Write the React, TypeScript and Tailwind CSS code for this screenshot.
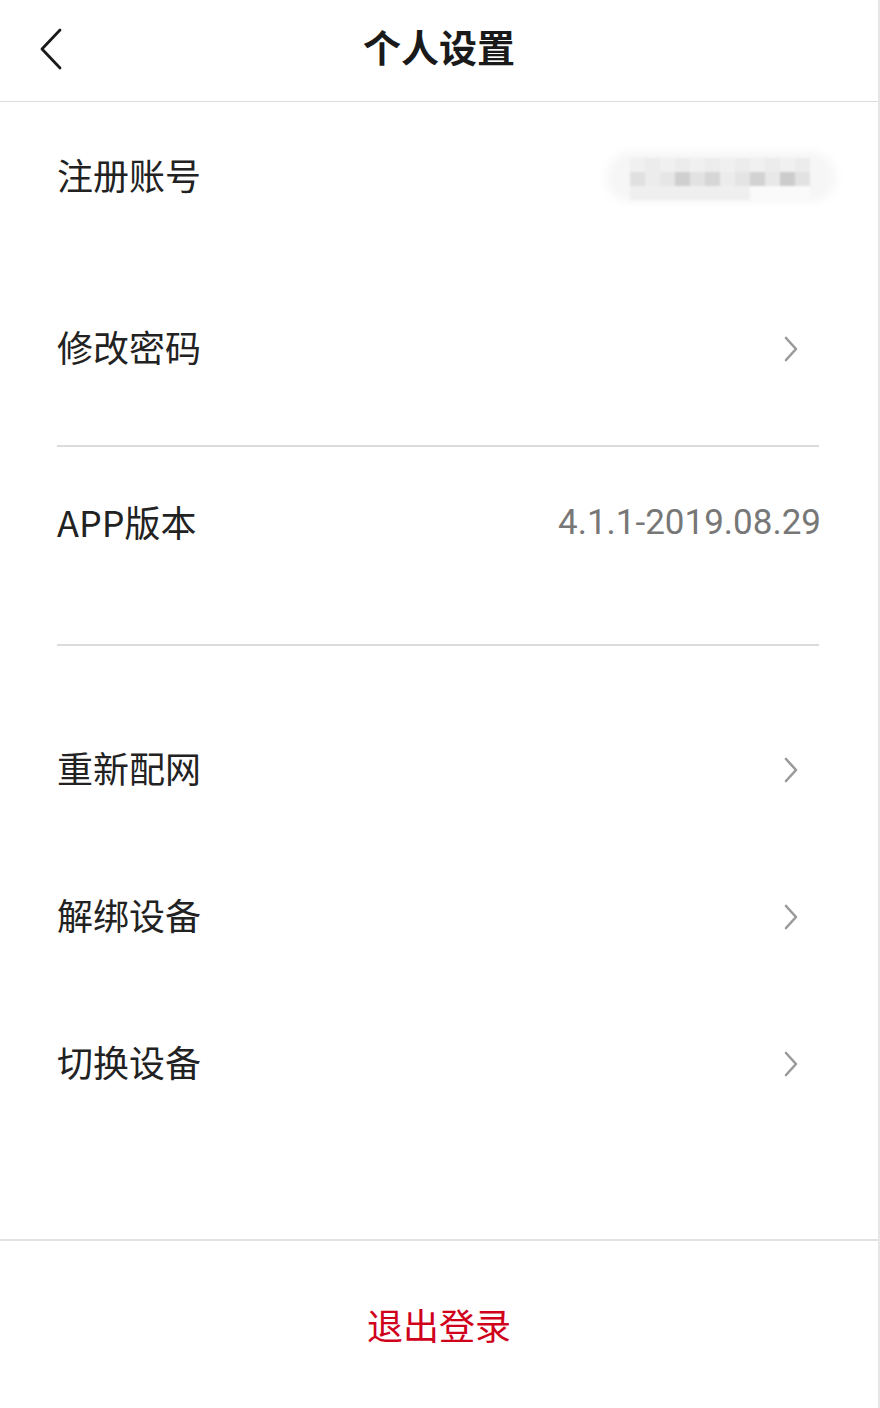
import React from "react";

const font = { fontFamily: '"Noto Sans CJK SC", "Noto Sans", sans-serif' };

function Chevron() {
  return (
    <svg width="16" height="26" viewBox="0 0 16 26" className="mr-[22px]">
      <path d="M3 2 L13 13 L3 24" fill="none" stroke="#9a9a9a" strokeWidth="2.6" strokeLinecap="round" strokeLinejoin="round" />
    </svg>
  );
}

function Label({ children }: { children: React.ReactNode }) {
  return <span className="text-[36px] leading-[36px] pb-[6px] text-[#222]">{children}</span>;
}

function Blur() {
  const cells = ["#e0e0e0", "#ececec", "#e6e6e6", "#cfcfcf", "#e2e2e2", "#d6d6d6", "#ececec", "#e4e4e4", "#d2d2d2", "#e8e8e8", "#cccccc", "#e2e2e2"];
  return (
    <div className="relative w-[230px] h-[50px] mr-[-15px]">
      <div className="absolute inset-0 rounded-full bg-[#f6f6f6] blur-[4px]" />
      <div className="absolute left-[24px] top-[6px] flex flex-col blur-[1px]">
        <div className="flex">
          {cells.map((c, i) => (
            <div key={"a" + i} className="w-[15px] h-[14px]" style={{ background: i % 2 ? "#ececec" : "#f0f0f0" }} />
          ))}
        </div>
        <div className="flex">
          {cells.map((c, i) => (
            <div key={"b" + i} className="w-[15px] h-[14px]" style={{ background: c }} />
          ))}
        </div>
        <div className="flex">
          {cells.map((c, i) => (
            <div key={"c" + i} className="w-[15px] h-[14px]" style={{ background: i < 8 ? "#efefef" : "#fafafa" }} />
          ))}
        </div>
      </div>
    </div>
  );
}

export default function App() {
  return (
    <div className="w-[880px] h-[1408px] bg-white flex flex-col border-r-2 border-[#e6e6e6] overflow-hidden" style={font}>
      <div className="h-[102px] shrink-0 border-b-[1.5px] border-[#dcdcdc] relative flex items-center justify-center">
        <svg width="28" height="44" viewBox="0 0 28 44" className="absolute left-[37px] top-[27px]">
          <path d="M23 3 L5 22 L23 41" fill="none" stroke="#1a1a1a" strokeWidth="2.8" strokeLinecap="round" strokeLinejoin="round" />
        </svg>
        <span className="text-[38px] font-bold text-[#1a1a1a] leading-[38px] -mt-[10px]">个人设置</span>
      </div>

      <div className="px-[57px] flex-1 flex flex-col">
        <div className="h-[150px] flex items-center justify-between">
          <Label>注册账号</Label>
          <Blur />
        </div>
        <div className="h-[193px] flex items-center justify-between">
          <Label>修改密码</Label>
          <Chevron />
        </div>
        <div className="h-[2px] bg-[#dcdcdc] mr-[2px]" />
        <div className="h-[197px] flex items-start justify-between pt-[56px]">
          <Label>APP版本</Label>
          <span className="text-[35px] leading-[36px] text-[#777] mt-[2px]" style={{ fontFamily: 'Roboto, "Noto Sans", sans-serif' }}>
            4.1.1-2019.08.29
          </span>
        </div>
        <div className="h-[2px] bg-[#dcdcdc] mr-[2px]" />
        <div className="pt-[50px] flex flex-col">
          {["重新配网", "解绑设备", "切换设备"].map((t) => (
            <div key={t} className="h-[147px] flex items-center justify-between">
              <Label>{t}</Label>
              <Chevron />
            </div>
          ))}
        </div>
      </div>

      <div className="h-[169px] shrink-0 border-t-2 border-[#e2e2e2] flex items-center justify-center">
        <span className="text-[36px] leading-[36px] pb-[2px] text-[#d0021b]">退出登录</span>
      </div>
    </div>
  );
}
